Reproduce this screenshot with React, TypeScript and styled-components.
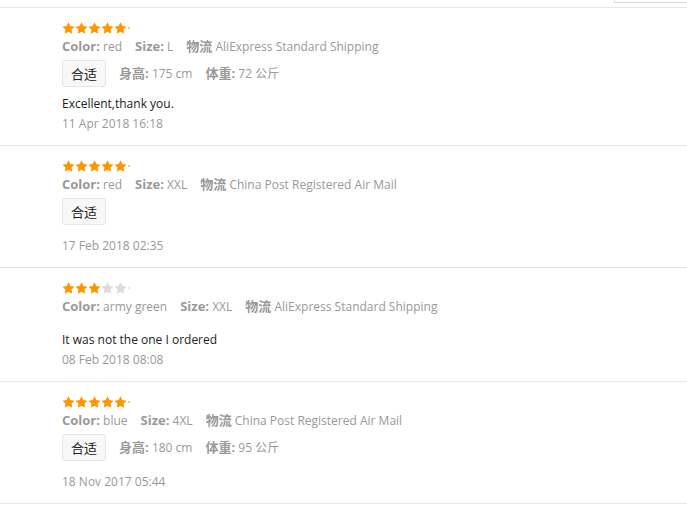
import React from 'react';
import styled, { createGlobalStyle } from 'styled-components';

interface Review {
  rating: number;
  color: string;
  size: string;
  shipping: string;
  fit?: string;
  height?: string;
  weight?: string;
  comment?: string;
  date: string;
}

const reviews: Review[] = [
  {
    rating: 5,
    color: 'red',
    size: 'L',
    shipping: 'AliExpress Standard Shipping',
    fit: '合适',
    height: '175 cm',
    weight: '72 公斤',
    comment: 'Excellent,thank you.',
    date: '11 Apr 2018 16:18'
  },
  {
    rating: 5,
    color: 'red',
    size: 'XXL',
    shipping: 'China Post Registered Air Mail',
    fit: '合适',
    date: '17 Feb 2018 02:35'
  },
  {
    rating: 3,
    color: 'army green',
    size: 'XXL',
    shipping: 'AliExpress Standard Shipping',
    comment: 'It was not the one I ordered',
    date: '08 Feb 2018 08:08'
  },
  {
    rating: 5,
    color: 'blue',
    size: '4XL',
    shipping: 'China Post Registered Air Mail',
    fit: '合适',
    height: '180 cm',
    weight: '95 公斤',
    date: '18 Nov 2017 05:44'
  }
];

const STAR_PATH =
  'M12 2l3.09 6.26L22 9.27l-5 4.87 1.18 6.88L12 17.77l-6.18 3.25L7 14.14 2 9.27l6.91-1.01L12 2z';

const Star = ({ on }: { on: boolean }) => (
  <StarIcon viewBox="1.6 1.6 20.8 19.8" on={on}>
    <path d={STAR_PATH} />
  </StarIcon>
);

const Stars = ({ rating }: { rating: number }) => (
  <StarRow>
    {[1, 2, 3, 4, 5].map(n => (
      <Star key={n} on={n <= rating} />
    ))}
    <StarTip on={rating >= 5} />
  </StarRow>
);

const Field = ({ label, value }: { label: string; value: string }) => (
  <MetaItem>
    <Label>{label}:</Label> {value}
  </MetaItem>
);

const ReviewItem = ({ review }: { review: Review }) => (
  <Item>
    <Stars rating={review.rating} />
    <Meta>
      <Field label="Color" value={review.color} />
      <Field label="Size" value={review.size} />
      <MetaItem>
        <Label>物流</Label> {review.shipping}
      </MetaItem>
    </Meta>
    {review.fit && (
      <TagRow>
        <FitTag>{review.fit}</FitTag>
        {review.height && <Field label="身高" value={review.height} />}
        {review.weight && <Field label="体重" value={review.weight} />}
      </TagRow>
    )}
    {review.comment && <Comment>{review.comment}</Comment>}
    <DateLine>{review.date}</DateLine>
  </Item>
);

const App = () => (
  <>
    <GlobalStyle />
    <TopBar>
      <TopBox />
    </TopBar>
    <List>
      {reviews.map(r => (
        <ReviewItem key={r.date} review={r} />
      ))}
    </List>
  </>
);

export default App;

const GlobalStyle = createGlobalStyle`
  body {
    margin: 0;
    background: #fff;
    font-family: 'Open Sans', 'Noto Sans CJK SC', sans-serif;
    font-size: 12px;
    color: #999;
  }
`;

const TopBar = styled.div`
  display: flex;
  justify-content: flex-end;
  height: 7px;
`;

const TopBox = styled.div`
  width: 73px;
  height: 3px;
  box-sizing: border-box;
  border: 1px solid #dedede;
  border-top: none;
  border-right: none;
`;

const List = styled.div`
  border-top: 1px solid #e8e8e8;
`;

const Item = styled.div`
  padding: 14px 0 12px 62px;
  border-bottom: 1px solid #e8e8e8;
`;

const StarRow = styled.div`
  display: flex;
  align-items: center;
  height: 11px;
`;

const StarIcon = styled.svg<{ on: boolean }>`
  width: 13px;
  height: 12px;
  display: block;
  fill: ${({ on }) => (on ? '#ff9600' : '#dcdcdc')};
`;

const StarTip = styled.span<{ on: boolean }>`
  width: 2px;
  height: 2px;
  margin-left: 1px;
  border-radius: 1px;
  background: ${({ on }) => (on ? '#ffb54d' : '#e6e6e6')};
`;

const Meta = styled.div`
  display: flex;
  height: 18px;
  margin-top: 5px;
  line-height: 18px;
`;

const MetaItem = styled.span`
  margin-right: 13px;
  white-space: nowrap;
`;

const Label = styled.b`
  font-size: 13px;
  line-height: 1;
  font-weight: 700;
  color: #999;
`;

const TagRow = styled.div`
  display: flex;
  align-items: center;
  height: 27px;
  margin-top: 4px;
  line-height: 18px;
`;

const FitTag = styled.span`
  height: 27px;
  box-sizing: border-box;
  display: inline-flex;
  align-items: center;
  padding: 0 8px;
  margin-right: 13px;
  font-size: 13px;
  color: #222;
  background: #f8f8f8;
  border: 1px solid #e6e6e6;
  border-radius: 3px;
`;

const Comment = styled.div`
  margin-top: 15px;
  line-height: 18px;
  color: #222;
  ${TagRow} + & {
    margin-top: 8px;
  }
`;

const DateLine = styled.div`
  margin-top: 12px;
  line-height: 18px;
  color: #999;
  ${Comment} + & {
    margin-top: 2px;
  }
`;
